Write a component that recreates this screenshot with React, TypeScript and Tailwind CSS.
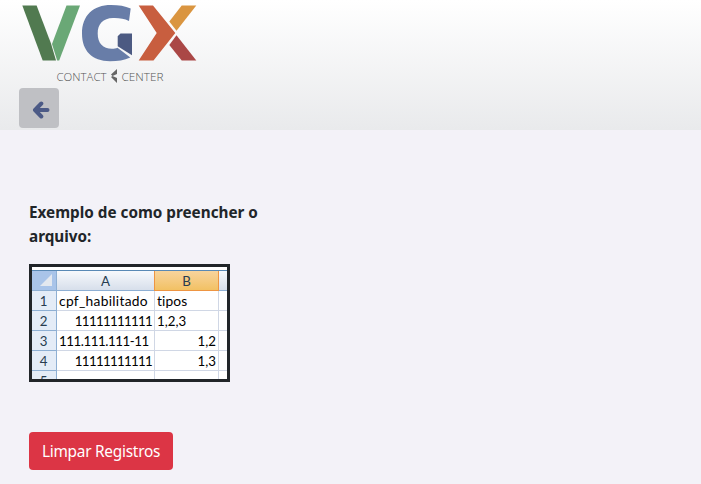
const rows = [
  { n: "1", a: "cpf_habilitado", b: "tipos", aStyle: "text-left text-[13.8px] leading-[19px] tracking-[0.29px]", bStyle: "text-left text-[13.8px] leading-[19px] tracking-[0.1px]" },
  { n: "2", a: "11111111111", b: "1,2,3", aStyle: "text-right tracking-[-0.7px]", bStyle: "text-left" },
  { n: "3", a: "111.111.111-11", b: "1,2", aStyle: "text-left tracking-[-0.45px]", bStyle: "text-right" },
  { n: "4", a: "11111111111", b: "1,3", aStyle: "text-right tracking-[-0.7px]", bStyle: "text-right" },
  { n: "5", a: "", b: "", aStyle: "text-left", bStyle: "text-left" },
];

function Logo() {
  return (
    <svg width="180" height="84" viewBox="20 0 180 84" className="block" role="img" aria-label="VGX Contact Center">
      <path d="M22.3 5.5H36.6L51 43.5L56 60.5H42.7Z" fill="#517a50" />
      <path d="M66.5 5.5H80L59.2 60.5H57.2L52 44Z" fill="#6aa876" />
      <path d="M130.7 8.5L129 21C124 18.5 119 17.8 113 18C103 18.3 97.7 24 97.7 33.5C97.7 43.5 103 48.7 112 48.7C114 48.7 116 48.3 117.5 47.7L130.3 57.5C124 60.3 118 61.2 110 61.2C92 61.2 82 50.8 82 33.5C82 15.5 93 5 111 5C119 5 125 6 130.7 8.5Z" fill="#687da8" />
      <path d="M120.5 33.5H132V55.2L117.7 46.2V36.2Z" fill="#4c5a82" />
      <path d="M138.7 5.5H153L175.3 33L153.5 60.5H138.7L156.7 33Z" fill="#c85e3f" />
      <path d="M181.7 5.5H196.3L176.5 30.7L169.3 21.5Z" fill="#da9540" />
      <path d="M176.5 35.3L196.3 60.5H181.7L169.3 45Z" fill="#aa4746" />
      <text x="56.5" y="80.5" fontSize="11.5" textLength="50" lengthAdjust="spacingAndGlyphs" fill="#555" className="font-['Open_Sans',sans-serif] font-light">CONTACT</text>
      <path d="M117 69V74L112.5 76L111 74.500Z M111 77L112.5 76L117 78V83Z" fill="#666" />
      <text x="121.5" y="80.5" fontSize="11.5" textLength="42" lengthAdjust="spacingAndGlyphs" fill="#555" className="font-['Open_Sans',sans-serif] font-light">CENTER</text>
    </svg>
  );
}

function Sheet() {
  return (
    <div className="flex h-[118px] w-[201px] flex-col overflow-hidden border-[3px] border-[#212529] bg-white font-[Lato,sans-serif] text-[13.3px] leading-[21px] text-black">
      <div className="h-1 shrink-0 border-b border-[#5989b5]" />
      <div className="flex h-5 shrink-0 text-center leading-[19px] text-[#273c50]">
        <div className="flex w-[25px] items-end justify-end border-r border-b border-[#8eafd3] bg-[#a9c4e9] pr-1 pb-1">
          <svg width="12" height="12" viewBox="0 0 12 12"><path d="M12 0V12H0Z" fill="#e3e8ef" /></svg>
        </div>
        <div className="w-[97px] border-b border-[#8eafd3] bg-linear-to-b from-[#f7f9fc] to-[#d7dfeb] pt-px">A</div>
        <div className="w-[65px] border border-t-0 border-[#ee9542] bg-linear-to-b from-[#f8d49c] to-[#f2c163] pt-px">B</div>
        <div className="flex-1 border-b border-[#8eafd3] bg-linear-to-b from-[#f7f9fc] to-[#d7dfeb]" />
      </div>
      {rows.map((r) => (
        <div key={r.n} className="flex h-5 shrink-0">
          <div className="w-[25px] border-r border-b border-[#8eafd3] bg-[#e4ecf7] pr-px text-center text-[#273c50]">{r.n}</div>
          <div className={`w-[98px] border-r border-b border-[#d0d7e5] px-[2px] whitespace-nowrap ${r.aStyle}`}>{r.a}</div>
          <div className={`w-[64px] border-r border-b border-[#d0d7e5] px-[2px] ${r.bStyle}`}>{r.b}</div>
          <div className="flex-1 border-b border-[#d0d7e5]" />
        </div>
      ))}
    </div>
  );
}

export default function App() {
  return (
    <div className="min-h-screen bg-[#f3f2f8] font-['Noto_Sans','Open_Sans',sans-serif] text-base text-[#212529]">
      <header className="h-[130px] bg-linear-to-b from-white to-[#e9eaec] pl-[19px]">
        <div className="h-[88px] pl-px"><Logo /></div>
        <button aria-label="Voltar" className="flex size-10 items-center justify-center rounded bg-[#bfc0c4] pl-1 pt-[3px]">
          <svg width="18" height="18" viewBox="0 0 18 18" fill="none" stroke="#4c5a86" strokeWidth="4" strokeLinecap="round" strokeLinejoin="round"><path d="M9.3 2.5L3 9L9.3 15.5M4 9H15.5" /></svg>
        </button>
      </header>
      <main className="px-[29px] pt-[70px]">
        <p className="w-[240px] text-[15.27px] leading-6 font-bold whitespace-nowrap">Exemplo de como preencher o<br />arquivo:</p>
        <div className="pt-4"><Sheet /></div>
        <button className="mt-[50px] flex h-[38px] w-36 items-center justify-center rounded bg-[#dc3545] pt-px text-[15.4px] tracking-[-0.25px] whitespace-nowrap text-white">Limpar Registros</button>
      </main>
    </div>
  );
}
